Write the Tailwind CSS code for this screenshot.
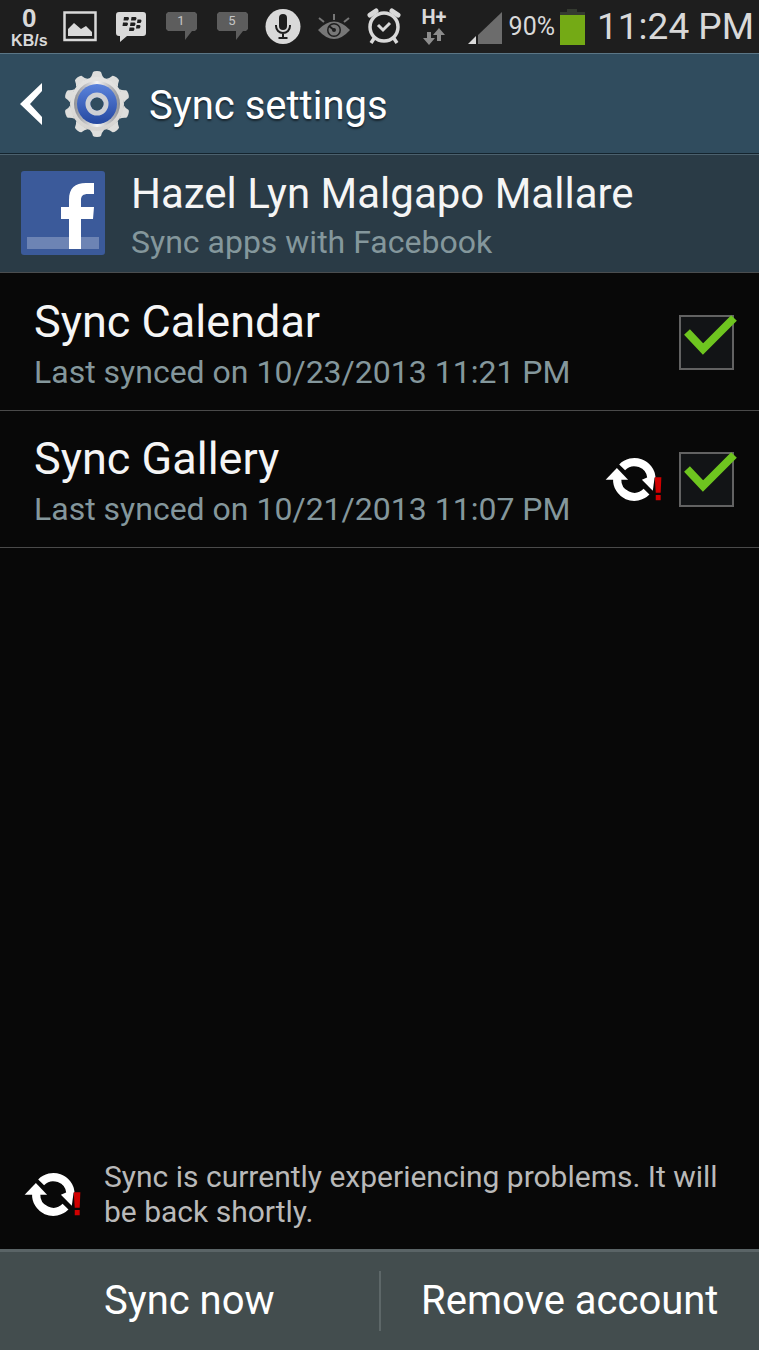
<!DOCTYPE html>
<html lang="en">
<head>
    <meta charset="UTF-8">
    <meta name="viewport" content="width=device-width, initial-scale=1.0">
    <title>Sync settings</title>
    <script src="https://cdn.jsdelivr.net/npm/@tailwindcss/browser@4"></script>
</head>
<body class="min-h-screen flex flex-col bg-[#080808] text-[#f5f5f5] font-['Roboto',sans-serif]">
    <!-- Shared icons -->
    <svg class="hidden">
        <symbol id="sync-problem" viewBox="44 470 176 134">
            <path d="M96 500 A52 52 0 0 1 185 532" fill="none" stroke="#fff" stroke-width="25"/>
            <path d="M156 538 L196 520 L189 571 Z" fill="#fff"/>
            <path d="M81 535 A52 52 0 0 0 170 574" fill="none" stroke="#fff" stroke-width="25"/>
            <path d="M46 538 L80 502 L114 538 Z" fill="#fff"/>
            <path d="M195 530 H215 L213 577 H198 Z M198 584 H213 V600 H198 Z" fill="#d00000"/>
        </symbol>
        <symbol id="tick" viewBox="0 0 64 56">
            <path d="M8 17 L24 34 L55 3" fill="none" stroke="#6ec51f" stroke-width="8"/>
        </symbol>
    </svg>

    <!-- Status bar -->
    <div class="flex items-center h-[53px] pl-1 pr-[5px] bg-[#1e1e1e] text-[#d9d9d9]">
        <div class="grid grid-cols-10 flex-1 justify-items-center items-center">
            <div class="flex flex-col items-center font-['Liberation_Sans',sans-serif] font-bold">
                <span class="text-[26px] leading-[28px]">0</span>
                <span class="text-[16px] leading-[18px]">KB/s</span>
            </div>
            <svg class="w-[50px] h-[53px]" viewBox="0 0 50 53">
                <rect x="9.5" y="12.5" width="31" height="27.5" fill="none" stroke="#d9d9d9" stroke-width="2.500"/>
                <path d="M13 36 V29 L19 23 L26 29 L31 26 L37 32 V36 Z" fill="#d9d9d9"/>
            </svg>
            <svg class="w-[50px] h-[53px]" viewBox="0 0 50 53">
                <path d="M13 12 H37 Q40 12 40 15 V33 Q40 36 37 36 H21 L14 42 V36 H13 Q10 36 10 33 V15 Q10 12 13 12 Z" fill="#d9d9d9"/>
                <g fill="#1e1e1e">
                    <path d="M18 17 h4 q2 1 0 3.500 h-4.500 Z M25.500 17 h4 q2 1 0 3.500 h-4.500 Z"/>
                    <path d="M17 22.500 h4 q2 1 0 3.500 h-4.500 Z M24.500 22.500 h4 q2 1 0 3.500 h-4.500 Z M31.500 19.500 h3 q2 1 0 3.500 h-3.500 Z"/>
                    <path d="M23.500 27.500 h4 q2 1 0 3.500 h-4.500 Z M30.500 25 h3 q2 1 0 3.500 h-3.500 Z"/>
                </g>
            </svg>
            <svg class="w-[50px] h-[53px]" viewBox="0 0 50 53">
                <path d="M12 12 H39 L41 14 V29 L39 31 H36 L29 40 V31 H12 L10 29 V14 Z" fill="#5d5d5d"/>
                <text x="25" y="25" font-size="13" text-anchor="middle" fill="#c5c5c5">1</text>
            </svg>
            <svg class="w-[50px] h-[53px]" viewBox="0 0 50 53">
                <path d="M12 12 H39 L41 14 V29 L39 31 H36 L29 40 V31 H12 L10 29 V14 Z" fill="#5d5d5d"/>
                <text x="25" y="25" font-size="13" text-anchor="middle" fill="#c5c5c5">5</text>
            </svg>
            <svg class="w-[50px] h-[53px]" viewBox="0 0 50 53">
                <circle cx="25" cy="26.500" r="17.500" fill="#d9d9d9"/>
                <rect x="21" y="14" width="8" height="16" rx="4" fill="#1e1e1e"/>
                <path d="M18 25 V26 A7 7 0 0 0 32 26 V25 M25 33 V38 M20.500 38 H29.500" fill="none" stroke="#1e1e1e" stroke-width="2"/>
            </svg>
            <svg class="w-[50px] h-[53px]" viewBox="0 0 50 53">
                <path d="M9 30 Q25 13 41 30 Q25 48 9 30 Z" fill="#777"/>
                <circle cx="25" cy="30" r="7" fill="#1e1e1e"/>
                <circle cx="25" cy="30" r="5.500" fill="#777"/>
                <circle cx="25" cy="30" r="2" fill="#1e1e1e"/>
                <path d="M20 26 L25 30" stroke="#1e1e1e" stroke-width="2"/>
                <path d="M25 14 V20 M10 18 L15 22 M40 18 L35 22" stroke="#777" stroke-width="2"/>
            </svg>
            <svg class="w-[50px] h-[53px]" viewBox="0 0 50 53" fill="none" stroke="#d9d9d9">
                <circle cx="25" cy="27" r="14" stroke-width="3.500"/>
                <path d="M19 25 L24 30 L31 23" stroke-width="3"/>
                <path d="M11 15 L17 11 M33 11 L39 15" stroke-width="5" stroke-linecap="round"/>
                <path d="M16 37 L12 43 M34 37 L38 43" stroke-width="3.500"/>
            </svg>
            <svg class="w-[50px] h-[53px]" viewBox="0 0 50 53">
                <text x="24" y="24" font-size="20" font-weight="700" text-anchor="middle" fill="#d9d9d9">H+</text>
                <path d="M17 32 H21 V38 H25 L19 45 L13 38 H17 Z M27 41 H31 V35 H35 L29 28 L23 35 H27 Z" fill="#8c8c8c"/>
            </svg>
            <svg class="w-[50px] h-[53px]" viewBox="0 0 50 53">
                <path d="M7 44 L15 36 V44 Z" fill="#d9d9d9"/>
                <path d="M17 35 L41 12 V44 H17 Z" fill="#6c6c6c"/>
            </svg>
        </div>
        <div class="flex items-center justify-end gap-1 w-[243px]">
            <span class="text-[25px] leading-[53px]">90%</span>
            <svg class="shrink-0 w-[26px] h-[53px]" viewBox="0 0 26 53">
                <path d="M8 9 H18 V12 H26 V15 H1 V12 H8 Z" fill="#343a30"/>
                <rect x="1" y="15" width="25" height="30" fill="#74aa15"/>
            </svg>
            <span class="pl-2 text-[37px] leading-[53px] whitespace-nowrap">11:24 PM</span>
        </div>
    </div>

    <!-- Action bar -->
    <header class="flex items-center h-[101px] pl-5 bg-[#304c5e] border-t border-[#5b7686] border-b border-b-[#14242e]">
        <a href="#" class="flex items-center" aria-label="Back">
            <svg class="w-[22px] h-[42px]" viewBox="0 0 22 42">
                <path d="M0 21 L22 0 V8 L10 21 L22 34 V42 Z" fill="#fff"/>
            </svg>
            <svg class="w-[68px] h-[68px] ml-[21px]" viewBox="-34 -34 68 68">
                <defs>
                    <linearGradient id="metal" x1="0" y1="0" x2="0" y2="1">
                        <stop offset="0" stop-color="#e4e4e2"/>
                        <stop offset="1" stop-color="#d6d4d1"/>
                    </linearGradient>
                    <linearGradient id="blue" x1="0" y1="0" x2="0" y2="1">
                        <stop offset="0" stop-color="#5b83dc"/>
                        <stop offset="1" stop-color="#2548a0"/>
                    </linearGradient>
                    <linearGradient id="rim" x1="0" y1="0" x2="1" y2="0">
                        <stop offset="0" stop-color="#8e9096"/>
                        <stop offset="0.500" stop-color="#f4f4f4"/>
                        <stop offset="1" stop-color="#8e9096"/>
                    </linearGradient>
                    <path id="tooth" d="M-7 -26 Q-5 -28 -4 -32 Q-3 -33 0 -33 Q3 -33 4 -32 Q5 -28 7 -26 Z"/>
                </defs>
                <g fill="#dededc">
                    <use href="#tooth"/>
                    <use href="#tooth" transform="rotate(36)"/>
                    <use href="#tooth" transform="rotate(72)"/>
                    <use href="#tooth" transform="rotate(108)"/>
                    <use href="#tooth" transform="rotate(144)"/>
                    <use href="#tooth" transform="rotate(180)"/>
                    <use href="#tooth" transform="rotate(216)"/>
                    <use href="#tooth" transform="rotate(252)"/>
                    <use href="#tooth" transform="rotate(288)"/>
                    <use href="#tooth" transform="rotate(324)"/>
                </g>
                <circle r="27" fill="url(#metal)"/>
                <circle r="23" fill="url(#rim)"/>
                <circle r="20" fill="url(#blue)"/>
                <circle r="9" fill="none" stroke="#cfd0d4" stroke-width="5"/>
                <circle r="6.500" fill="#304c5e"/>
            </svg>
        </a>
        <h1 class="pl-[18px] pt-1 text-[40px] leading-[48px] text-white text-shadow-[0_2px_2px_#00000080]">Sync settings</h1>
    </header>

    <!-- Account -->
    <section class="flex items-center gap-[26px] h-[119px] pl-[21px] pb-[2px] bg-[#2a3b46] border-t border-t-[#4c616e] border-b border-b-[#4a4d4f]">
        <svg class="w-[84px] h-[84px]" viewBox="0 0 84 84">
            <rect width="84" height="84" rx="3" fill="#3b5a9a"/>
            <rect x="6" y="66" width="72" height="12" fill="#6d84b4"/>
            <path d="M48 78 V48 H40 V36 H48 V29 C48 17 54 12 65 12 H73 V23 H67 C62 23 60 25 60 29 V36 H73 L72 48 H60 V78 Z" fill="#fff"/>
        </svg>
        <div class="pt-2">
            <h2 class="text-[42px] leading-[50px]">Hazel Lyn Malgapo Mallare</h2>
            <p class="text-[32px] leading-[46px] text-[#84979c]">Sync apps with Facebook</p>
        </div>
    </section>

    <!-- Sync items -->
    <main class="flex-1 pt-px">
        <label class="flex items-center h-[137px] pl-[34px] pr-[25px] border-b border-[#4a4a4a]">
            <span class="flex-1 pt-1">
                <span class="block text-[45px] leading-[56px]">Sync Calendar</span>
                <span class="block text-[32px] leading-[44px] text-[#84979c]">Last synced on 10/23/2013 11:21 PM</span>
            </span>
            <span class="relative w-[55px] h-[55px]">
                <input type="checkbox" checked class="peer block appearance-none w-full h-full bg-[#121416] border-2 border-[#626262]">
                <svg class="absolute top-0 left-0 w-[64px] h-[56px] hidden peer-checked:block pointer-events-none"><use href="#tick"/></svg>
            </span>
        </label>
        <label class="flex items-center h-[137px] pl-[34px] pr-[25px] border-b border-[#4a4a4a]">
            <span class="flex-1 pt-1">
                <span class="block text-[45px] leading-[56px]">Sync Gallery</span>
                <span class="block text-[32px] leading-[44px] text-[#84979c]">Last synced on 10/21/2013 11:07 PM</span>
            </span>
            <svg class="w-[58px] h-[45px] mr-4"><use href="#sync-problem"/></svg>
            <span class="relative w-[55px] h-[55px]">
                <input type="checkbox" checked class="peer block appearance-none w-full h-full bg-[#121416] border-2 border-[#626262]">
                <svg class="absolute top-0 left-0 w-[64px] h-[56px] hidden peer-checked:block pointer-events-none"><use href="#tick"/></svg>
            </span>
        </label>
    </main>

    <!-- Sync problem notice -->
    <div class="flex items-center gap-[22px] pl-6 pr-8 pb-5">
        <svg class="shrink-0 w-[58px] h-[45px]"><use href="#sync-problem"/></svg>
        <p class="text-[30px] leading-[35px] text-[#b9b9b9]">Sync is currently experiencing problems. It will be back shortly.</p>
    </div>

    <!-- Bottom actions -->
    <footer class="flex items-center h-[101px] bg-[#434d4e] border-t-3 border-[#5a6466] text-[40px] leading-[48px] text-white">
        <button type="button" class="flex-1 h-[60px] border-r-2 border-[#5d6768]">Sync now</button>
        <button type="button" class="flex-1 h-[60px]">Remove account</button>
    </footer>
</body>
</html>
